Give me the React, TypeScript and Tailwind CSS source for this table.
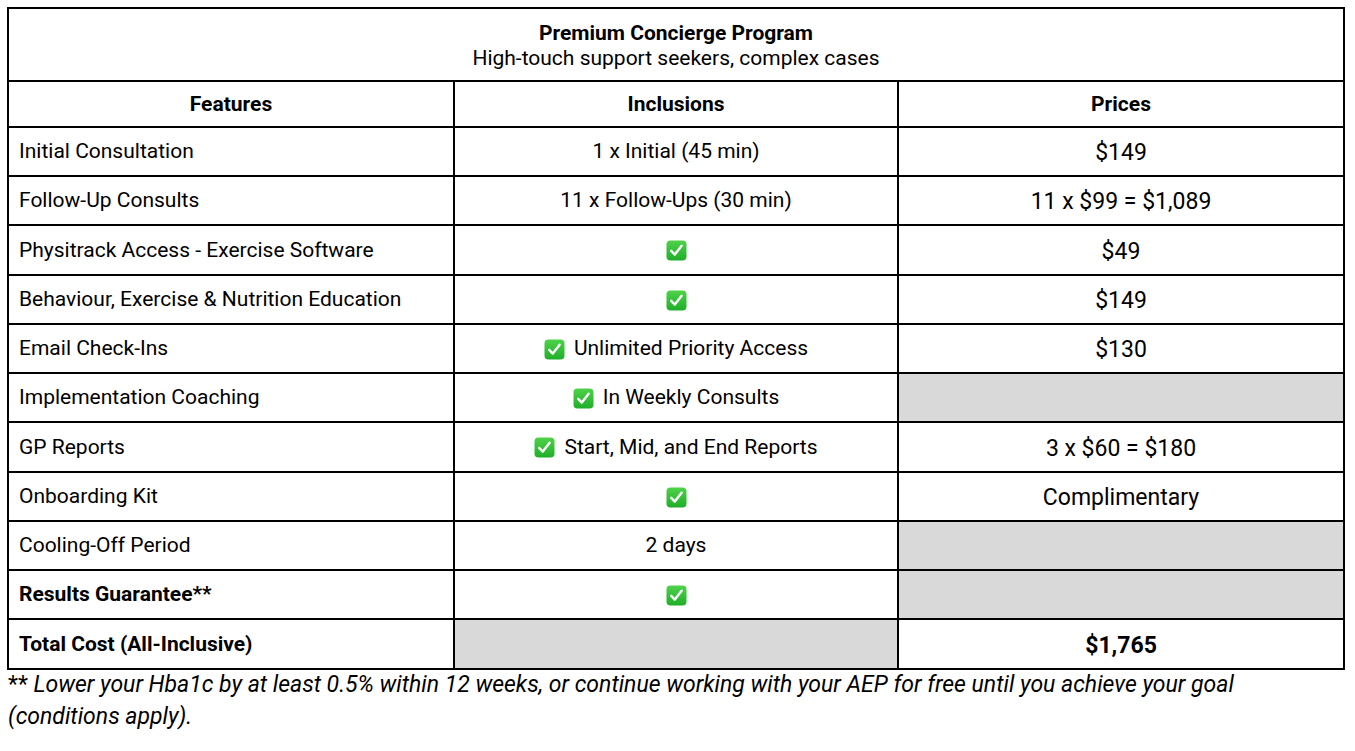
const rows: { feature: string; bold?: boolean; check?: boolean; inclusion?: string; price?: string; tall?: boolean }[] = [
  { feature: 'Initial Consultation', inclusion: '1 x Initial (45 min)', price: '$149' },
  { feature: 'Follow-Up Consults', inclusion: '11 x Follow-Ups (30 min)', price: '11 x $99 = $1,089' },
  { feature: 'Physitrack Access - Exercise Software', check: true, price: '$49', tall: true },
  { feature: 'Behaviour, Exercise & Nutrition Education', check: true, price: '$149' },
  { feature: 'Email Check-Ins', check: true, inclusion: 'Unlimited Priority Access', price: '$130' },
  { feature: 'Implementation Coaching', check: true, inclusion: 'In Weekly Consults' },
  { feature: 'GP Reports', check: true, inclusion: 'Start, Mid, and End Reports', price: '3 x $60 = $180', tall: true },
  { feature: 'Onboarding Kit', check: true, price: 'Complimentary' },
  { feature: 'Cooling-Off Period', inclusion: '2 days' },
  { feature: 'Results Guarantee**', bold: true, check: true },
];

function Check() {
  return (
    <svg width="21" height="21" viewBox="0 0 21 21" className="inline-block shrink-0">
      <defs>
        <linearGradient id="g" x1="0" y1="0" x2="0" y2="1">
          <stop offset="0" stopColor="#4fd24a" />
          <stop offset="1" stopColor="#1fae2a" />
        </linearGradient>
      </defs>
      <rect x="0.5" y="0.5" width="20" height="20" rx="4" fill="url(#g)" />
      <path d="M5.2 10.8 L8.8 14.6 L15.6 5.8" fill="none" stroke="#fff" strokeWidth="2.4" strokeLinecap="round" strokeLinejoin="round" />
    </svg>
  );
}

export default function App() {
  const cell = 'border-2 border-black';
  return (
    <div className="min-h-screen bg-white pt-[7px] pl-[7px] text-black" style={{ fontFamily: 'Roboto, "Liberation Sans", sans-serif' }}>
      <table className="border-collapse table-fixed w-[1336px] text-[21px]">
        <colgroup>
          <col className="w-[446px]" />
          <col className="w-[444px]" />
          <col className="w-[446px]" />
        </colgroup>
        <tbody>
          <tr className="h-[73px]">
            <td colSpan={3} className={`${cell} text-center leading-[25px] pt-[2px]`}>
              <div className="font-bold">Premium Concierge Program</div>
              <div>High-touch support seekers, complex cases</div>
            </td>
          </tr>
          <tr className="h-[46px]">
            <th className={`${cell} font-bold pt-[2px]`}>Features</th>
            <th className={`${cell} font-bold pt-[2px]`}>Inclusions</th>
            <th className={`${cell} font-bold pt-[2px]`}>Prices</th>
          </tr>
          {rows.map((r) => (
            <tr key={r.feature} className={r.tall ? 'h-[50px]' : 'h-[49px]'}>
              <td className={`${cell} pl-[10px] pt-[1px] ${r.bold ? 'font-bold' : ''}`}>{r.feature}</td>
              <td className={`${cell} pt-[1px]`}>
                <div className="flex items-center justify-center gap-[9px]">
                  {r.check && <Check />}
                  {r.inclusion && <span>{r.inclusion}</span>}
                </div>
              </td>
              <td className={`${cell} text-center text-[23px] pt-[4px] ${r.price ? '' : 'bg-[#d9d9d9]'}`}>{r.price}</td>
            </tr>
          ))}
          <tr className="h-[50px]">
            <td className={`${cell} pl-[10px] pt-[1px] font-bold`}>Total Cost (All-Inclusive)</td>
            <td className={`${cell} bg-[#d9d9d9]`}></td>
            <td className={`${cell} text-center font-bold text-[23px] pt-[4px]`}>$1,765</td>
          </tr>
        </tbody>
      </table>
      <p className="pl-[1px] text-[23px] leading-[32px] -mt-[1px]">
        <span>**</span>
        <span className="italic"> Lower your Hba1c by at least 0.5% within 12 weeks, or continue working with your AEP for free until you achieve your goal</span>
        <br />
        <span className="italic">(conditions apply).</span>
      </p>
    </div>
  );
}
